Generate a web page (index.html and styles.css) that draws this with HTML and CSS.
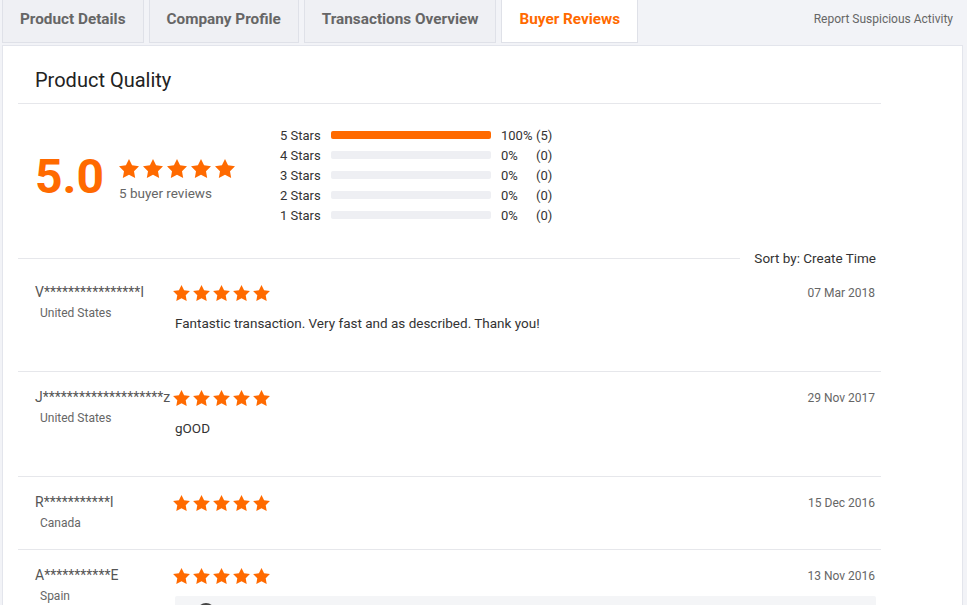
FILE: index.html
```html
<!DOCTYPE html>
<html lang="en">
<head>
    <meta charset="UTF-8">
    <meta name="viewport" content="width=device-width, initial-scale=1.0">
    <title>Buyer Reviews</title>
    <link rel="stylesheet" href="styles.css">
</head>
<body>
    <!-- star shape reused by every rating -->
    <svg class="defs" xmlns="http://www.w3.org/2000/svg">
        <symbol id="star" viewBox="2 2 20 19">
            <path d="M12 2l3.09 6.26L22 9.27l-5 4.87 1.18 6.88L12 17.77l-6.18 3.25L7 14.14 2 9.27l6.91-1.01L12 2z"/>
        </symbol>
    </svg>

    <div class="page">
        <div class="tabs">
            <div class="tab">Product Details</div>
            <div class="tab">Company Profile</div>
            <div class="tab">Transactions Overview</div>
            <div class="tab active">Buyer Reviews</div>
            <div class="report">Report Suspicious Activity</div>
        </div>

        <div class="panel">
            <div class="content">
                <h2 class="panel-title">Product Quality</h2>

                <!-- Rating summary -->
                <div class="summary">
                    <div class="score">
                        <div class="score-num">5.0</div>
                        <div class="score-info">
                            <div class="stars stars-lg">
                                <svg><use href="#star"/></svg>
                                <svg><use href="#star"/></svg>
                                <svg><use href="#star"/></svg>
                                <svg><use href="#star"/></svg>
                                <svg><use href="#star"/></svg>
                            </div>
                            <div class="score-count">5 buyer reviews</div>
                        </div>
                    </div>

                    <div class="histogram">
                        <div class="bar-row">
                            <span class="bar-label">5 Stars</span>
                            <span class="bar"><span class="bar-fill" style="width: 100%"></span></span>
                            <span class="bar-pct">100%</span>
                            <span class="bar-count">(5)</span>
                        </div>
                        <div class="bar-row">
                            <span class="bar-label">4 Stars</span>
                            <span class="bar"><span class="bar-fill" style="width: 0%"></span></span>
                            <span class="bar-pct">0%</span>
                            <span class="bar-count">(0)</span>
                        </div>
                        <div class="bar-row">
                            <span class="bar-label">3 Stars</span>
                            <span class="bar"><span class="bar-fill" style="width: 0%"></span></span>
                            <span class="bar-pct">0%</span>
                            <span class="bar-count">(0)</span>
                        </div>
                        <div class="bar-row">
                            <span class="bar-label">2 Stars</span>
                            <span class="bar"><span class="bar-fill" style="width: 0%"></span></span>
                            <span class="bar-pct">0%</span>
                            <span class="bar-count">(0)</span>
                        </div>
                        <div class="bar-row">
                            <span class="bar-label">1 Stars</span>
                            <span class="bar"><span class="bar-fill" style="width: 0%"></span></span>
                            <span class="bar-pct">0%</span>
                            <span class="bar-count">(0)</span>
                        </div>
                    </div>
                </div>

                <div class="sort-row">
                    <div class="sort-line"></div>
                    <div class="sort-by">Sort by: Create Time</div>
                </div>

                <!-- Review list -->
                <div class="review">
                    <div class="review-user">
                        <div class="review-name">V****************l</div>
                        <div class="review-country">United States</div>
                    </div>
                    <div class="review-body">
                        <div class="review-head">
                            <div class="stars">
                                <svg><use href="#star"/></svg>
                                <svg><use href="#star"/></svg>
                                <svg><use href="#star"/></svg>
                                <svg><use href="#star"/></svg>
                                <svg><use href="#star"/></svg>
                            </div>
                            <div class="review-date">07 Mar 2018</div>
                        </div>
                        <p class="review-text">Fantastic transaction. Very fast and as described. Thank you!</p>
                    </div>
                </div>

                <div class="review">
                    <div class="review-user">
                        <div class="review-name">J********************z</div>
                        <div class="review-country">United States</div>
                    </div>
                    <div class="review-body">
                        <div class="review-head">
                            <div class="stars">
                                <svg><use href="#star"/></svg>
                                <svg><use href="#star"/></svg>
                                <svg><use href="#star"/></svg>
                                <svg><use href="#star"/></svg>
                                <svg><use href="#star"/></svg>
                            </div>
                            <div class="review-date">29 Nov 2017</div>
                        </div>
                        <p class="review-text">gOOD</p>
                    </div>
                </div>

                <div class="review">
                    <div class="review-user">
                        <div class="review-name">R***********l</div>
                        <div class="review-country">Canada</div>
                    </div>
                    <div class="review-body">
                        <div class="review-head">
                            <div class="stars">
                                <svg><use href="#star"/></svg>
                                <svg><use href="#star"/></svg>
                                <svg><use href="#star"/></svg>
                                <svg><use href="#star"/></svg>
                                <svg><use href="#star"/></svg>
                            </div>
                            <div class="review-date">15 Dec 2016</div>
                        </div>
                    </div>
                </div>

                <div class="review">
                    <div class="review-user">
                        <div class="review-name">A***********E</div>
                        <div class="review-country">Spain</div>
                    </div>
                    <div class="review-body">
                        <div class="review-head">
                            <div class="stars">
                                <svg><use href="#star"/></svg>
                                <svg><use href="#star"/></svg>
                                <svg><use href="#star"/></svg>
                                <svg><use href="#star"/></svg>
                                <svg><use href="#star"/></svg>
                            </div>
                            <div class="review-date">13 Nov 2016</div>
                        </div>
                        <div class="reply">
                            <span class="avatar"></span>
                        </div>
                    </div>
                </div>
            </div>
        </div>
    </div>
</body>
</html>
```

FILE: styles.css
```css
/* Basic Reset */
* {
    margin: 0;
    padding: 0;
    box-sizing: border-box;
}

html,
body {
    height: 100%;
    overflow: hidden;
}

body {
    font-family: Roboto, "Liberation Sans", Arial, sans-serif;
    background-color: #f2f3f7;
    color: #333;
}

.defs {
    display: none;
}

.page {
    width: 961px;
    margin-left: 2px;
}

/* Tabs */
.tabs {
    display: flex;
    height: 43px;
}

.tab {
    height: 43px;
    padding: 0 17px;
    margin-right: 5px;
    line-height: 39px;
    font-size: 15.3px;
    font-weight: bold;
    color: #666;
    background-color: #eff0f4;
    border: 1px solid #dfe1e8;
    border-top: none;
}

.tab.active {
    background-color: #fff;
    color: #ff6a00;
}

.report {
    margin-left: auto;
    padding-right: 10px;
    line-height: 38px;
    font-size: 12px;
    color: #666;
}

/* Panel */
.panel {
    height: 600px;
    margin-top: 2px;
    padding-left: 15px;
    background-color: #fff;
    border: 1px solid #e3e5ec;
    border-bottom: none;
}

.content {
    width: 863px;
}

.panel-title {
    padding: 22px 17px 11px;
    font-size: 20px;
    font-weight: 400;
    line-height: 24px;
    color: #222;
    border-bottom: 1px solid #e6e7eb;
}

/* Rating summary */
.summary {
    display: flex;
    padding: 21px 0 24px 16px;
}

.score {
    display: flex;
    width: 246px;
    margin-top: 26px;
    align-self: flex-start;
}

.score-num {
    width: 85px;
    padding-left: 1px;
    font-size: 48px;
    line-height: 52px;
    font-weight: bold;
    color: #ff6a00;
}

.score-info {
    margin-top: 7px;
}

.score-count {
    margin-top: 6px;
    font-size: 13.5px;
    line-height: 18px;
    color: #666;
}

.stars {
    display: flex;
    align-items: center;
    gap: 3px;
    height: 20px;
}

.stars svg {
    width: 17px;
    height: 16px;
    fill: #ff6a00;
}

.stars-lg {
    gap: 4px;
}

.stars-lg svg {
    width: 20px;
    height: 19px;
}

.bar-row {
    display: flex;
    align-items: center;
    height: 20px;
    font-size: 13px;
    color: #333;
}

.bar-label {
    width: 51px;
}

.bar {
    width: 160px;
    height: 8px;
    background-color: #eeeff3;
    border-radius: 2px;
    overflow: hidden;
}

.bar-fill {
    display: block;
    height: 100%;
    background-color: #ff6a00;
}

.bar-pct {
    width: 35px;
    margin-left: 10px;
}

/* Sort */
.sort-row {
    display: flex;
    align-items: center;
    height: 18px;
}

.sort-line {
    flex: 1;
    height: 1px;
    background-color: #e6e7eb;
}

.sort-by {
    margin: 0 5px 0 14px;
    font-size: 13.5px;
}

/* Reviews */
.review {
    display: flex;
    padding: 15px 6px 15px 17px;
    border-bottom: 1px solid #e6e7eb;
}

.review-user {
    width: 138px;
    flex-shrink: 0;
}

.review-name {
    font-size: 14px;
    line-height: 20px;
    color: #555;
    white-space: nowrap;
}

.review-country {
    padding-left: 5px;
    font-size: 12px;
    line-height: 22px;
    color: #666;
}

.review-body {
    flex: 1;
}

.review-head {
    display: flex;
    align-items: flex-start;
    justify-content: space-between;
    height: 20px;
}

.review-head .stars {
    padding-top: 1px;
}

.review-text {
    margin: 11px 0 23px 2px;
    font-size: 13.5px;
    line-height: 20px;
    color: #333;
}

.review-date {
    font-size: 12px;
    line-height: 22px;
    color: #666;
}

.reply {
    height: 60px;
    margin: 11px -1px 0 2px;
    padding: 7px 22px;
    background-color: #f4f5f7;
    border-radius: 2px;
}

.avatar {
    display: block;
    width: 18px;
    height: 18px;
    border-radius: 50%;
    background-color: #444;
}
```
